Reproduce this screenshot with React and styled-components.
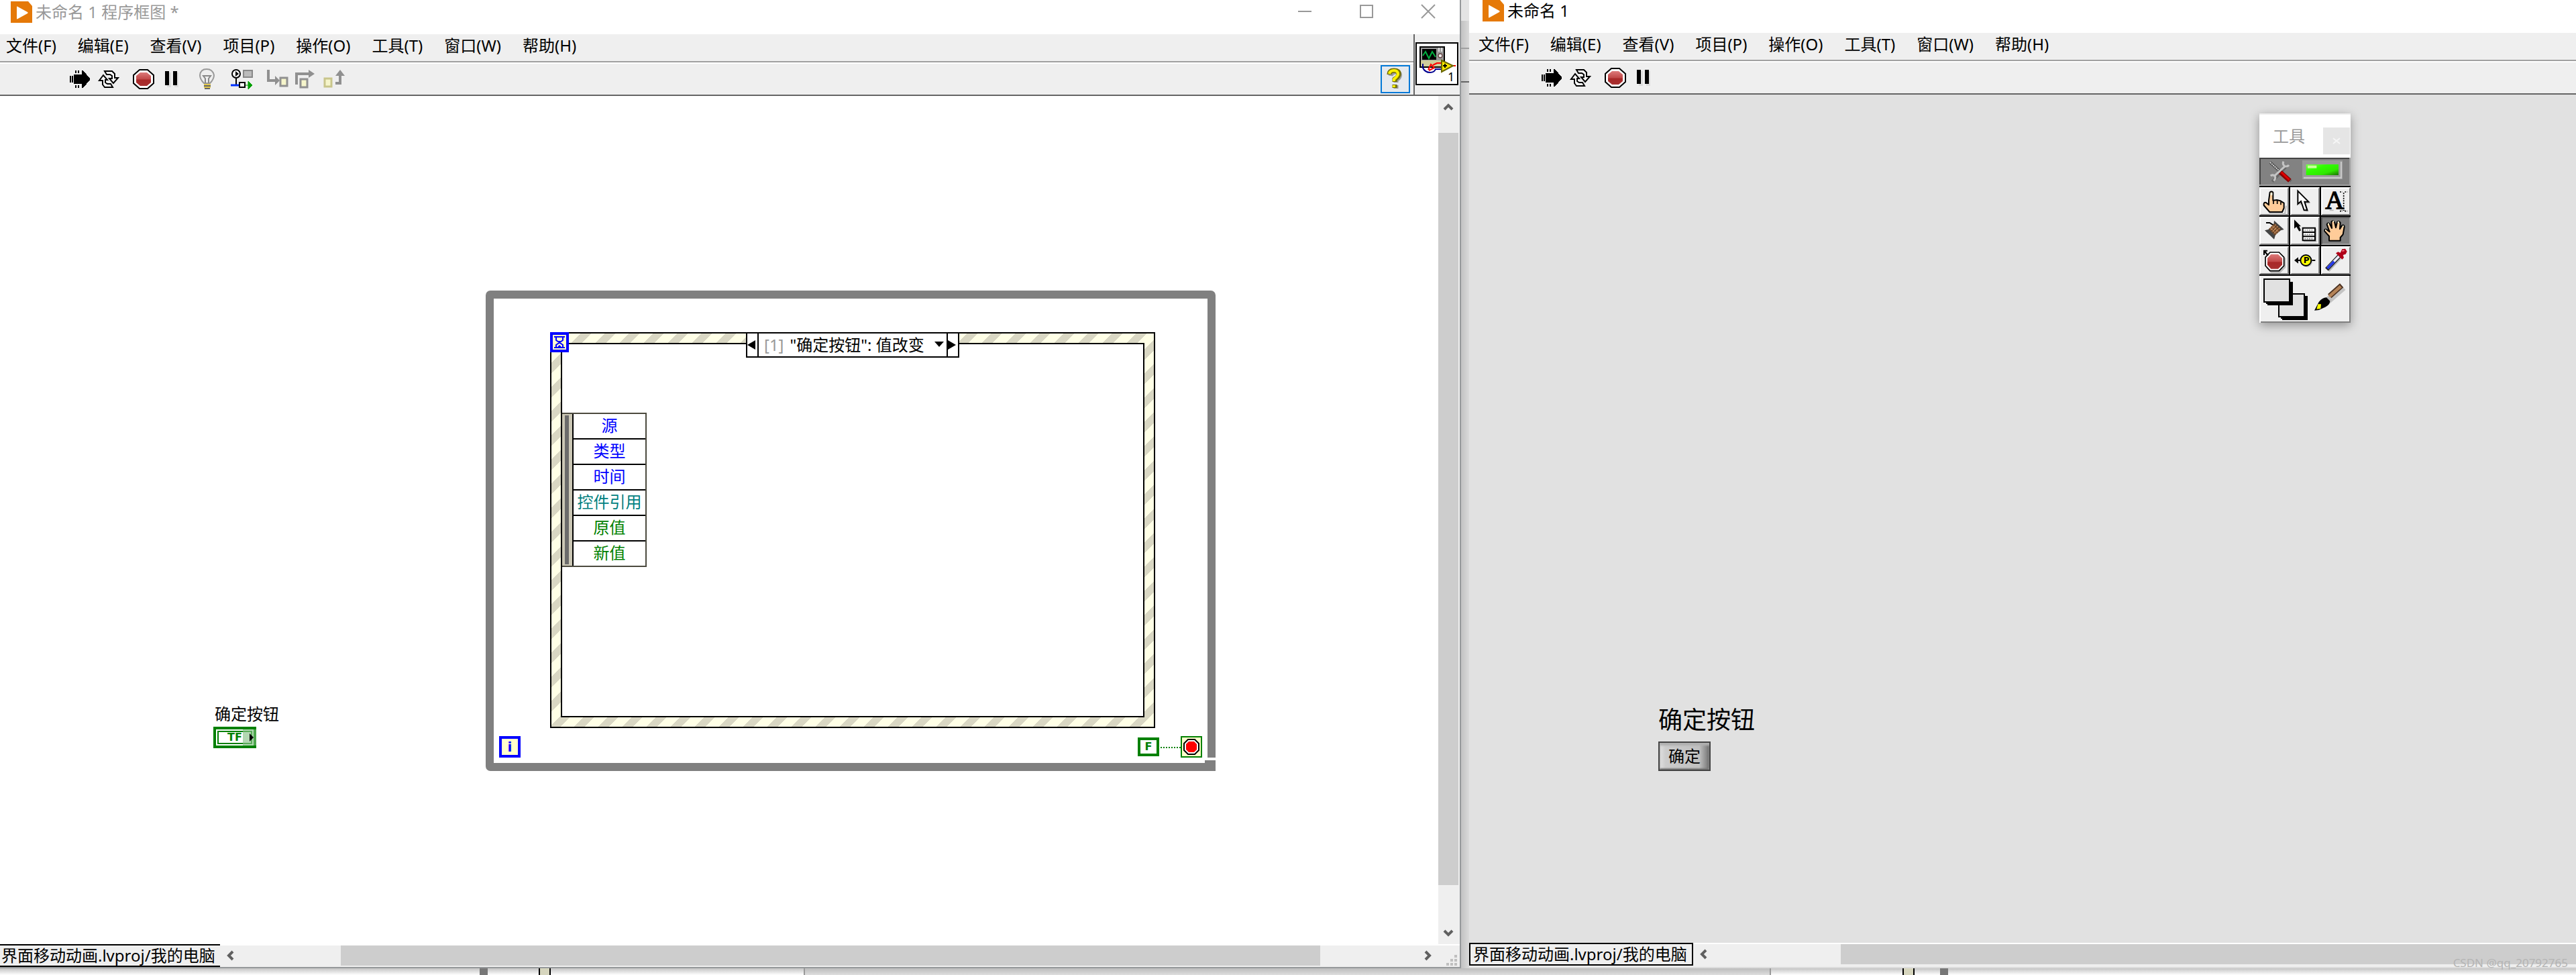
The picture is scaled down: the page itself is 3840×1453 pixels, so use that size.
import React from "react";
import styled, { createGlobalStyle, css } from "styled-components";

const Global = createGlobalStyle`
  *, *::before, *::after { box-sizing: border-box; }
  html, body, #root { height: 100%; }
  body {
    margin: 0;
    background: #dcdcdc;
    color: #000;
    font: 24px/32px "Noto Sans", "Noto Sans CJK SC", sans-serif;
    overflow: hidden;
  }
  button, select { font: inherit; color: inherit; margin: 0; padding: 0; border: 0; background: none; }
  svg { display: block; overflow: visible; }
`;

const line = "#646464";
const face = "#efefef";

/* ---------- page ---------- */

const Desktop = styled.div`
  min-height: 100%;
  display: flex;
  flex-direction: column;
`;

const Windows = styled.main`
  flex: 1;
  display: grid;
  grid-template-columns: minmax(0, 2178fr) 12px minmax(0, 1650fr);
`;

const Divider = styled.div`
  display: flex;
  flex-direction: column;
  gap: 48px;
  padding-top: 71px;
  background: linear-gradient(#e4e4e4 31px, transparent 31px), linear-gradient(90deg, #c2c2c2, #dadada);
`;

const DividerMark = styled.span`
  height: 2px;
  background: ${(p) => p.$color};
`;

const Window = styled.section`
  display: flex;
  flex-direction: column;
  min-width: 0;
  background: ${face};
  ${(p) =>
    p.$framed
      ? css`
          border-right: 2px solid #96999b;
          border-bottom: 2px solid #96999b;
        `
      : css`
          margin-bottom: 2px;
        `}
`;

/* ---------- title bar ---------- */

const TitleBar = styled.header`
  display: flex;
  align-items: flex-start;
  height: ${(p) => (p.$active ? 49 : 51)}px;
  padding: ${(p) => (p.$active ? "0 0 0 20px" : "2px 0 0 16px")};
  background: #fff;
  color: ${(p) => (p.$active ? "#000" : "#999")};
`;

const Title = styled.h1`
  flex: 1;
  margin: 0 0 0 5px;
  font-size: 24px;
  font-weight: 400;
  line-height: 32px;
`;

const Caption = styled.div`
  display: flex;
  gap: 72px;
  padding: 5px 37px 0 0;
`;

const CaptionButton = styled.button`
  width: 20px;
  height: 20px;
`;

/* ---------- menus and tool bars ---------- */

const Head = styled.div`
  display: flex;
`;

const HeadMain = styled.div`
  flex: 1;
  min-width: 0;
`;

const MenuBar = styled.nav`
  display: flex;
  gap: 32px;
  height: 44px;
  padding: 0 0 0 ${(p) => p.$indent}px;
  border-bottom: 2px solid #fff;
  box-shadow: inset 0 -2px #a0a0a0;
`;

const MenuItem = styled.button`
  height: 34px;
  line-height: 34px;
  white-space: nowrap;
`;

const ToolBar = styled.div`
  display: flex;
  align-items: center;
  height: 48px;
  padding: 0 5px 0 ${(p) => p.$indent}px;
  border-bottom: 2px solid ${line};
`;

const ToolGroup = styled.div`
  display: flex;
  align-items: center;
  gap: ${(p) => p.$gap}px;
  margin-right: ${(p) => p.$after || 0}px;
`;

const HelpButton = styled.button`
  display: grid;
  place-items: center;
  width: 44px;
  height: 42px;
  margin-left: auto;
  border: 2px solid #0078d7;
  background: #e5e9ee;
`;

const ConnectorPane = styled.div`
  width: 69px;
  padding: 12px 0 0 1px;
  border-left: 2px solid ${line};
  border-bottom: 2px solid ${line};
`;

const ViIcon = styled.button`
  display: block;
  width: 64px;
  height: 64px;
  border: 2px solid #000;
  background: #fff;
`;

/* ---------- work area ---------- */

const Body = styled.div`
  flex: 1;
  display: flex;
`;

const Canvas = styled.div`
  position: relative;
  flex: 1;
  min-width: 0;
  overflow: hidden;
  background: ${(p) => p.$color};
`;

const Placed = styled.div`
  position: absolute;
  left: ${(p) => p.$x}px;
  top: ${(p) => p.$y}px;
`;

const VScroll = styled.div`
  display: flex;
  flex-direction: column;
  width: 32px;
  padding-right: 2px;
`;

const VTrack = styled.div`
  flex: 1;
  display: grid;
  grid-template-rows: 21fr 1123fr 54fr;
`;

const VThumb = styled.div`
  grid-row: 2;
  background: #cdcdcd;
`;

const ScrollButton = styled.button`
  display: grid;
  place-items: center;
  width: ${(p) => (p.$vertical ? 30 : 32)}px;
  height: ${(p) => (p.$vertical ? 34 : 30)}px;
`;

const StatusBar = styled.footer`
  display: flex;
  align-items: flex-start;
  height: ${(p) => p.$height}px;
`;

const ProjectPath = styled.button`
  width: ${(p) => (p.$boxed ? 334 : 328)}px;
  height: 34px;
  padding-left: ${(p) => (p.$boxed ? 4 : 2)}px;
  border: solid #000;
  border-width: ${(p) => (p.$boxed ? "2px" : "2px 0")};
  line-height: 30px;
  text-align: left;
  white-space: nowrap;
`;

const HScroll = styled.div`
  flex: 1;
  display: flex;
  height: 34px;
  border-top: 2px solid #fff;
`;

const HTrack = styled.div`
  flex: 1;
  height: 30px;
  display: grid;
  grid-template-columns: ${(p) => p.$columns};
`;

const HThumb = styled.div`
  grid-column: 2;
  background: #cdcdcd;
`;

/* ---------- block diagram ---------- */

const WhileLoop = styled.div`
  width: 1088px;
  height: 716px;
  border: 12px solid #808080;
  border-radius: 7px 7px 0 7px;
`;

const EventCase = styled.div`
  width: 902px;
  height: 590px;
  padding: 14px;
  border: 2px solid #000;
  background: linear-gradient(
      135deg,
      #ffffe6 11.1%, #d9d7c3 11.1% 33.3%, #ffffe6 33.3% 61.1%, #d9d7c3 61.1% 83.3%, #ffffe6 83.3%
    )
    0 0 / 36px 36px;
`;

const EventBody = styled.div`
  height: 100%;
  border: 2px solid #000;
  background: #fff;
`;

const CaseSelector = styled.div`
  display: flex;
  align-items: stretch;
  width: 318px;
  height: 38px;
  border: 2px solid #000;
  background: #fff;
  line-height: 34px;
`;

const CaseStep = styled.button`
  display: grid;
  align-items: center;
  justify-items: start;
  width: 15px;
`;

const CaseField = styled.div`
  position: relative;
  flex: 1;
  display: flex;
  gap: 9px;
  padding-left: 8px;
  border: solid #000;
  border-width: 0 2px;
  white-space: nowrap;

  label { color: #999; }
  select { flex: 1; appearance: none; line-height: 32px; outline: 0; }
  svg { position: absolute; right: 4px; top: 12px; pointer-events: none; }
`;

const EventNode = styled.div`
  display: flex;
  width: 126px;
  border: 2px solid #4c4a3f;
  border-left: 0;
  background: #fff;
`;

const NodeGrip = styled.div`
  width: 15px;
  padding: 2px 5px 2px 4px;
  background: #cbc7b5;

  &::before { content: ""; display: block; height: 100%; background: #6b6b6b; }
`;

const NodeList = styled.ul`
  flex: 1;
  margin: 0;
  padding: 0;
  border-left: 2px solid #000;
  list-style: none;
`;

const NodeItem = styled.li`
  height: 38px;
  line-height: 34px;
  text-align: center;
  color: ${(p) => p.$color};
  border-bottom: 2px solid #000;

  &:last-child { height: 36px; border-bottom: 0; }
`;

const Terminal = styled.div`
  display: grid;
  place-items: center;
  width: 32px;
  height: ${(p) => p.$height || 32}px;
  border: ${(p) => p.$border || 4}px solid ${(p) => p.$color};
  background: ${(p) => p.$fill || "#ffffcc"};
  color: ${(p) => p.$color};
  font: bold ${(p) => p.$size || 20}px/20px "DejaVu Sans", sans-serif;
`;

const Wire = styled.div`
  width: 30px;
  height: 2px;
  background: repeating-linear-gradient(90deg, #008000 0 2px, #fff 2px 4px);
`;

const ResizeGap = styled.div`
  width: 12px;
  height: 4px;
  background: #fff;
`;

const ResizeCorner = styled.div`
  width: 16px;
  height: 6px;
  background: #808080;
`;

const BoolTerminal = styled.div`
  width: 64px;
  height: 32px;
  padding: 2px;
  border: 4px solid #008000;
  background: #fff;
  position: relative;

  span {
    display: block;
    height: 20px;
    padding-left: 13px;
    border: 2px solid #008000;
    color: #008000;
    font: bold 16px/16px "DejaVu Sans", sans-serif;
  }
  svg { position: absolute; right: -4px; top: 0; }
`;

const Label = styled.div`
  font-size: ${(p) => p.$size}px;
  line-height: ${(p) => p.$size + 8}px;
  white-space: nowrap;
`;

/* ---------- front panel ---------- */

const OkButton = styled.button`
  width: 78px;
  height: 44px;
  border: 2px solid #444;
  background: linear-gradient(90deg, #e0e0e0, #cccccc 12%, #c0c0c0 80%, #8a8a8a 94%, #666);
  box-shadow: inset 0 4px 3px #b0b0b0, inset 0 -2px 2px #777;
  line-height: 36px;
`;

const Palette = styled.aside`
  width: 136px;
  border-top: 2px solid #eee;
  background: #000;
  box-shadow: 0 4px 14px rgba(0, 0, 0, 0.35);
`;

const PaletteTitle = styled.div`
  display: flex;
  justify-content: space-between;
  align-items: flex-start;
  height: 64px;
  padding: 0 1px 0 20px;
  background: #fff;
  color: #999;

  h2 { margin: 0; font-size: 24px; font-weight: 400; line-height: 64px; }
`;

const PaletteClose = styled.button`
  display: grid;
  place-items: center;
  width: 40px;
  height: 40px;
  margin-top: 19px;
  background: #e5e5e5;
`;

const AutoTool = styled.button`
  display: block;
  width: 136px;
  height: 42px;
  background: #828282;
`;

const ToolGrid = styled.div`
  display: grid;
  grid-template-columns: repeat(3, 44px);
  gap: 2px;
  padding: 2px 0;
`;

const Tool = styled.button`
  height: 42px;
  border: 2px solid;
  border-color: ${(p) => (p.$on ? "#5a5a5a #a0a0a0 #a0a0a0 #5a5a5a" : "#fff #7f7f7f #7f7f7f #fff")};
  background: ${(p) => (p.$on ? "#7f7f7f" : face)};
`;

const ColorTool = styled.button`
  display: block;
  width: 136px;
  height: 70px;
  background: ${face};
  box-shadow: inset 2px 0 #fff, inset -2px -2px #7f7f7f;
`;

/* ---------- what shows below the windows ---------- */

const Behind = styled.div`
  display: grid;
  grid-template-columns: 1200fr 1440fr 1200fr;
  height: 10px;
`;

const BehindPane = styled.div`
  display: grid;
  grid-template-columns: ${(p) => p.$columns || "1fr"};
  background: ${(p) => (p.$dark ? "linear-gradient(#bcbcbc, #dedede)" : "linear-gradient(#c4c4c4, #fff)")};
  border-right: ${(p) => (p.$edge ? "2px solid #999" : "0")};
`;

const BehindBar = styled.span`
  background: #777;
`;

const BehindStripe = styled.span`
  border: solid #000;
  border-width: 0 2px;
  background: #d6d5bd;
`;

const Watermark = styled.div`
  position: absolute;
  right: 12px;
  bottom: 6px;
  color: #b4b4b4;
  font: 17px/24px "Noto Sans", sans-serif;
`;

/* ---------- drawings ---------- */

const Logo = () => (
  <svg width="32" height="32" viewBox="0 0 32 32" aria-hidden="true">
    <path d="M0 0H26L32 7V32H0Z" fill="#e57908" />
    <path d="M9 8.500Q9 7 10.500 8L25 16Q26.500 17 25 18L10.500 26Q9 27 9 25.500Z" fill="#fff" />
  </svg>
);

const RunIcon = () => (
  <svg width="30" height="26" viewBox="0 0 15 13" shapeRendering="crispEdges">
    <path d="M3 3H9V0H10L15 6V7L10 13H9V10H3Z" />
    <path d="M0 4h1v5h-1zM1.500 4h1v5h-1zM4 0h1v2h-1zM6 0h1v2h-1zM4 11h1v2h-1zM6 11h1v2h-1z" />
  </svg>
);

const LoopIcon = () => (
  <svg width="32" height="28" viewBox="0 0 16 14">
    <path d="M5 1H10.500L12.500 3V6H15L11.500 10L8.500 6.500H10.500V4.500L9 3.500H6.500Z" fill="#fff" stroke="#000" />
    <path d="M11 13H5L3.500 11V8H1L4 4L7 7.500H5.500V9.500L7 10.500H9.500Z" fill="#fff" stroke="#000" />
  </svg>
);

const StopIcon = () => (
  <svg width="32" height="30" viewBox="0 0 32 30">
    <defs>
      <linearGradient id="stop" x2="0" y2="1">
        <stop offset="0" stopColor="#dd7a7a" />
        <stop offset=".5" stopColor="#c04848" />
        <stop offset=".55" stopColor="#a82828" />
        <stop offset="1" stopColor="#a83030" />
      </linearGradient>
    </defs>
    <path d="M10 1H22L31 9V21L22 29H10L1 21V9Z" fill="#fff" stroke="#000" strokeWidth="2" />
    <path d="M11 5H21L27 10V20L21 25H11L5 20V10Z" fill="url(#stop)" />
  </svg>
);

const PauseIcon = () => (
  <svg width="20" height="24" viewBox="0 0 20 24">
    <path d="M3 2h6v22h-6zM14 2h6v22h-6z" fill="#ddd" />
    <path d="M0 0h6v21h-6zM12 0h6v21h-6z" />
  </svg>
);

const BulbIcon = () => (
  <svg width="26" height="32" viewBox="0 0 26 32">
    <path d="M8 22Q2 16 2 10Q3 1 12 1T23 10Q23 16 17 22Z" fill="#eee" stroke="#999" strokeWidth="2" />
    <path d="M10 22V15L7 11H18L15 15V22" fill="none" stroke="#888" strokeWidth="2" />
    <path d="M8 23h10v2H8zM8 27h10v2H8z" fill="#e3c94c" />
    <path d="M8 25h10v2H8zM9 29h8v2H9z" fill="#666" />
  </svg>
);

const RetainIcon = () => (
  <svg width="34" height="30" viewBox="0 0 34 30">
    <circle cx="8" cy="7" r="6" fill="#fff" stroke="#000" strokeWidth="2" />
    <path d="M7 3v8l5-4z" />
    <path d="M19 2h13v10H19z" fill="#bbb" stroke="#888" strokeWidth="2" />
    <path d="M8 13V23" stroke="#000" strokeWidth="2" />
    <path d="M0 24H13" stroke="#0030ff" strokeWidth="3" />
    <path d="M13 20h8v7h-8z" fill="#fff" stroke="#000" strokeWidth="2" />
    <path d="M22 24h4M26 18l6 6-6 6z" fill="#00a000" stroke="#00a000" />
  </svg>
);

const stepPaths = {
  into: ["M2 0V16H14", "M12 9l7 7-7 7z", [20, 12]],
  over: ["M2 22V6H20", "M20 0l9 6-9 6z", [8, 14]],
  out: ["M18 20H25V8", "M18 9l7-9 7 9z", [2, 13]],
};

const StepIcon = ({ kind }) => {
  const [tail, head, [x, y]] = stepPaths[kind];
  return (
    <svg width="34" height="28" viewBox="0 0 34 28">
      <path d={tail} fill="none" stroke="#909090" strokeWidth="4" />
      <path d={head} fill="#909090" />
      <rect x={x} y={y} width="10" height="12" fill="#f6f5cb" stroke={kind === "out" ? "#c9c68c" : "#909090"} strokeWidth="3" />
    </svg>
  );
};

const HelpIcon = () => (
  <svg width="28" height="32" viewBox="0 0 28 32">
    <path d="M7 11Q8 5 15 5Q22 6 20 12Q19 15 15 17V21M15 25V30" fill="none" stroke="#999" strokeWidth="7" />
    <path d="M5 9Q5 3 12 3Q20 3 19 9Q19 12 13 16V20M13 24V29" fill="none" stroke="#716d00" strokeWidth="7" />
    <path d="M5 8Q6 3 12 3Q18 3 18 9Q17 12 12 16V19M12 25V28" fill="none" stroke="#fff200" strokeWidth="4" />
  </svg>
);

const ScopeIcon = () => (
  <svg width="60" height="60" viewBox="1 1 30 30">
    <path d="M3.500 3.500H21.500V18.500H3.500Z" fill="#cfcc9c" stroke="#000" />
    <path d="M4 4H21V13.500H4Z" fill="#999" />
    <path d="M5 5H15.500V13H5Z" />
    <path d="M5.500 10L7.500 7L10 12L12.500 7L15 11" fill="none" stroke="#00b040" />
    <path d="M17.500 4v3M19.500 4v3" stroke="#ddd" />
    <circle cx="18.500" cy="10" r="1.500" fill="#eee" stroke="#644" strokeWidth=".7" />
    <path d="M5.500 16V19Q7 22.500 11 22.500Q14 22.500 15 20H19" fill="none" stroke="#000090" />
    <path d="M9.500 20.500L11.500 16.500L14 19L10 21M13 17L16 15.500H19M26 17.500H30" fill="none" stroke="#f00" />
    <path d="M19.500 13.500L28 17.500L19.500 22Z" fill="#ffe800" stroke="#6b6800" />
    <path d="M20.500 17.500h3M22 16v3" stroke="#000" />
    <text x="24" y="29" fontSize="9" fontFamily="Noto Sans, sans-serif">1</text>
  </svg>
);

const turns = { up: 0, right: 90, down: 180, left: 270 };

const Chevron = ({ to }) => (
  <svg width="16" height="16" viewBox="0 0 16 16" aria-hidden="true">
    <path d="M2 11L8 5L14 11" fill="none" stroke="#606060" strokeWidth="4" transform={`rotate(${turns[to]} 8 8)`} />
  </svg>
);

const SizeGrip = () => (
  <svg width="32" height="32" viewBox="0 0 32 32" aria-hidden="true">
    <path d="M24 14h4v4h-4zM18 20h4v4h-4zM24 20h4v4h-4zM12 26h4v4h-4zM18 26h4v4h-4zM24 26h4v4h-4z" fill="#bfbfbf" />
  </svg>
);

const Triangle = ({ d, w, h }) => (
  <svg width={w} height={h} viewBox={`0 0 ${w} ${h}`} aria-hidden="true"><path d={d} /></svg>
);

const Hourglass = () => (
  <svg width="28" height="30" viewBox="0 0 14 15">
    <path d="M0 0H14V15H0Z" fill="#00f" />
    <path d="M2 2H12V13H2Z" fill="#ffffcc" />
    <path d="M3 3.500H11M3 11.500H11M4.500 4V6L9.500 9.500V11M9.500 4V6L4.500 9.500V11" fill="none" stroke="#00f" />
    <path d="M5.500 11L7 9.500L8.500 11ZM6 6.500h2L7 7.500z" fill="#00f" />
  </svg>
);

const hand = { fill: "#ffcc99", stroke: "#000", strokeWidth: 6, strokeLinejoin: "round" };

const tools = [
  {
    name: "操作值",
    box: "90 393 120 114",
    art: (
      <>
        <path d="M128 506L198 506L204 470" fill="none" stroke="#bbb" strokeWidth="6" />
        <path d="M131 410Q138 403 145 410V446L162 444L178 448L194 458V480L186 498H130L104 468Q102 452 114 456L126 466V446Z" {...hand} />
        <path d="M147 446V462M164 446V462M180 452V466" stroke="#000" strokeWidth="5" />
        <path d="M134 411h8v12h-8z" fill="#ffffe0" />
      </>
    ),
  },
  {
    name: "定位",
    box: "228 393 120 114",
    art: (
      <>
        <path d="M264 412V468L276 458L292 496H304L292 460H312Z" fill="#bbb" />
        <path d="M256 404V462L270 450L284 490H298L286 452H304Z" fill="#fff" stroke="#000" strokeWidth="6" />
      </>
    ),
  },
  {
    name: "编辑文本",
    box: "366 393 120 114",
    art: (
      <>
        <path d="M398 490H416M448 490H468" stroke="#bbb" strokeWidth="5" />
        <text x="379" y="484" fontSize="116" stroke="#000" strokeWidth="4" fontFamily="Liberation Serif, serif">A</text>
        <path d="M461 412V492M444 408H456M466 408H478M444 494H456M466 494H478" stroke="#000" strokeWidth="5" strokeDasharray="6 5" />
      </>
    ),
  },
  {
    name: "连线",
    box: "90 525 120 114",
    art: (
      <>
        <path d="M114 546H130L146 556" fill="none" stroke="#000" strokeWidth="6" />
        <path d="M150 536L194 576L180 580L156 600L150 620L108 580L124 576L148 556Z" fill="#444" />
        <path d="M126 574L152 548L180 576L154 602Z" fill="#6b4426" />
        <path d="M133 567L161 595M141 559L169 587M166 562L140 588M174 570L148 596M158 554L132 580" stroke="#d89c68" strokeWidth="4" strokeDasharray="5 4" />
      </>
    ),
  },
  {
    name: "对象快捷菜单",
    box: "228 525 120 114",
    art: (
      <>
        <path d="M240 532V572L250 564L262 584L270 580L262 562H270Z" />
        <path d="M282 572H340V632H282Z" fill="#bbb" />
        <path d="M278 569H333V625H278ZM278 588H333M278 607H333" fill="#fff" stroke="#000" strokeWidth="6" />
        <path d="M286 579H328M286 598H328M286 617H328" stroke="#888" strokeWidth="5" strokeDasharray="6 4" />
      </>
    ),
  },
  {
    name: "滚动窗口",
    box: "366 525 120 114",
    on: true,
    art: (
      <>
        <path d="M396 626V606L376 584Q374 572 384 576L398 586L386 554Q388 544 398 550L408 570L406 542Q412 534 420 542L426 568L432 542Q440 536 446 546L444 574L454 558Q464 554 464 564L458 598L446 612V626Z" {...hand} />
        <path d="M412 540h6M434 543h7M390 551h6M456 561h5M378 579h5" stroke="#fffbd8" strokeWidth="6" />
      </>
    ),
  },
  {
    name: "断点",
    box: "90 657 120 114",
    art: (
      <>
        <path d="M136 682H178L202 706V746L178 770H136L114 746Z" fill="#bbb" />
        <path d="M132 678H172L194 700V738L172 761H132L111 738V700Z" fill="#fff" stroke="#000" strokeWidth="5" />
        <path d="M136 687H168L186 704V734L168 752H136L120 734V704Z" fill="url(#stop)" />
        <path d="M102 668h18v6h-8l14 16-6 4-12-14v10h-6z" />
      </>
    ),
  },
  {
    name: "探针",
    box: "228 657 120 114",
    art: (
      <>
        <path d="M254 714H334" stroke="#000" strokeWidth="6" />
        <path d="M240 714L258 700V728Z" />
        <circle cx="296" cy="719" r="25" fill="#bbb" />
        <circle cx="292" cy="714" r="24" fill="#ff0" stroke="#000" strokeWidth="6" />
        <text x="281" y="727" fontSize="36" fontWeight="bold" fontFamily="DejaVu Sans, sans-serif">P</text>
      </>
    ),
  },
  {
    name: "获取颜色",
    box: "366 657 120 114",
    art: (
      <>
        <path d="M392 760L444 704" stroke="#bbb" strokeWidth="14" />
        <path d="M385 754L444 692" stroke="#222" strokeWidth="19" />
        <path d="M390 748L442 694" stroke="#eef" strokeWidth="11" />
        <path d="M388 750L418 719" stroke="#2438e8" strokeWidth="11" />
        <path d="M426 682L436 676L446 680L454 664L468 662L476 674L470 686L458 690L462 702L454 710Z" fill="#b00018" />
        <path d="M454 672L464 670" stroke="#ff8090" strokeWidth="5" />
      </>
    ),
  },
];

const AutoArt = () => (
  <svg width="136" height="42" viewBox="84 255 408 126">
    <defs>
      <linearGradient id="led" x2="1" y2="1">
        <stop offset="0" stopColor="#7dff50" />
        <stop offset=".35" stopColor="#30ff00" />
        <stop offset=".7" stopColor="#30e800" />
        <stop offset="1" stopColor="#1c7000" />
      </linearGradient>
    </defs>
    <path d="M84 258H492M87 255V381" stroke="#444" strokeWidth="6" />
    <path d="M84 378H492M489 255V381" stroke="#a2a2a2" strokeWidth="6" />
    <path d="M142 362L206 292M184 322L226 360" stroke="#666" strokeWidth="12" />
    <path d="M132 276L178 318" stroke="#444" strokeWidth="12" />
    <path d="M132 276L178 318" stroke="#d8d8d8" strokeWidth="6" strokeDasharray="6 3" />
    <path d="M150 338L200 292M192 272Q186 284 196 292Q208 298 216 288M134 336Q144 328 154 338Q158 350 148 358" fill="none" stroke="#c4c4c4" strokeWidth="9" />
    <path d="M178 320L220 358" stroke="#800" strokeWidth="20" />
    <path d="M182 320L218 354" stroke="#e00000" strokeWidth="9" />
    <path d="M276 267H456V351H276Z" fill="#999" />
    <path d="M282 345H450V273" fill="none" stroke="#c8c8c8" strokeWidth="7" />
    <path d="M293 285H438V333H293Z" fill="url(#led)" />
    <path d="M300 290h40v12h-40z" fill="#c8ff9c" />
  </svg>
);

const ColorArt = () => (
  <svg width="136" height="70" viewBox="84 783 408 210">
    <path d="M180 873H300V981H186V975H180Z" />
    <path d="M171 864H285V966H171Z" fill="#e1e1e1" stroke="#000" strokeWidth="6" />
    <path d="M120 810H234V915H120V909H114V804Z" />
    <path d="M105 798H219V900H105Z" fill="#e1e1e1" stroke="#000" strokeWidth="6" />
    <path d="M372 920L464 840" stroke="#c4c4c4" strokeWidth="16" />
    <path d="M398 874L452 826" stroke="#4a3020" strokeWidth="24" />
    <path d="M396 876L448 830" stroke="#b48358" strokeWidth="14" />
    <path d="M380 882L392 872L408 890L396 900Z" fill="#bbb" />
    <path d="M330 938L350 900Q366 880 384 880L400 896Q400 912 376 924L350 936Z" />
    <path d="M340 932L346 910H360L358 930Z" fill="#ff0" />
  </svg>
);

/* ---------- assembled parts ---------- */

const menus = ["文件(F)", "编辑(E)", "查看(V)", "项目(P)", "操作(O)", "工具(T)", "窗口(W)", "帮助(H)"];

const Menu = ({ indent }) => (
  <MenuBar $indent={indent}>
    {menus.map((m) => <MenuItem key={m}>{m}</MenuItem>)}
  </MenuBar>
);

const RunTools = ({ after }) => (
  <>
    <ToolGroup $gap={12} $after={20}>
      <button aria-label="运行"><RunIcon /></button>
      <button aria-label="连续运行"><LoopIcon /></button>
    </ToolGroup>
    <ToolGroup $gap={16} $after={after}>
      <button aria-label="中止执行"><StopIcon /></button>
      <button aria-label="暂停"><PauseIcon /></button>
    </ToolGroup>
  </>
);

const nodeItems = [
  ["源", "#0000ff"],
  ["类型", "#0000ff"],
  ["时间", "#0000ff"],
  ["控件引用", "#008080"],
  ["原值", "#008000"],
  ["新值", "#008000"],
];

const Diagram = () => (
  <Canvas $color="#fff">
    <Placed $x={724} $y={290}><WhileLoop /></Placed>
    <Placed $x={1796} $y={990}><ResizeCorner /></Placed>
    <Placed $x={1800} $y={986}><ResizeGap /></Placed>
    <Placed $x={820} $y={352}>
      <EventCase><EventBody /></EventCase>
    </Placed>
    <Placed $x={820} $y={352}><Hourglass /></Placed>
    <Placed $x={1112} $y={352}>
      <CaseSelector>
        <CaseStep aria-label="上一分支"><Triangle w={12} h={14} d="M12 0V14L0 7Z" /></CaseStep>
        <CaseField>
          <label htmlFor="case">[1]</label>
          <select id="case"><option>"确定按钮": 值改变</option></select>
          <Triangle w={14} h={8} d="M0 0H14L7 8Z" />
        </CaseField>
        <CaseStep aria-label="下一分支"><Triangle w={12} h={14} d="M0 0V14L12 7Z" /></CaseStep>
      </CaseSelector>
    </Placed>
    <Placed $x={838} $y={472}>
      <EventNode>
        <NodeGrip />
        <NodeList>
          {nodeItems.map(([text, color]) => <NodeItem key={text} $color={color}>{text}</NodeItem>)}
        </NodeList>
      </EventNode>
    </Placed>
    <Placed $x={744} $y={954}><Terminal $color="#0000ff">i</Terminal></Placed>
    <Placed $x={1696} $y={956}><Terminal $color="#008000" $height={28} $fill="#fff" $size={16}>F</Terminal></Placed>
    <Placed $x={1730} $y={970}><Wire /></Placed>
    <Placed $x={1760} $y={954}>
      <Terminal $color="#008000" $border={2}>
        <svg width="24" height="24" viewBox="0 0 24 24">
          <path d="M7 1H17L23 7V17L17 23H7L1 17V7Z" fill="#fff" stroke="#000" strokeWidth="2" />
          <path d="M8 4H16L20 8V16L16 20H8L4 16V8Z" fill="#f00" />
        </svg>
      </Terminal>
    </Placed>
    <Placed $x={320} $y={905}><Label $size={24}>确定按钮</Label></Placed>
    <Placed $x={318} $y={940}>
      <BoolTerminal>
        <span>TF</span>
        <svg width="20" height="24" viewBox="0 0 20 24">
          <path d="M0 0H20V24H0Z" fill="#fff" opacity=".3" />
          <path d="M0 0H16V24H0Z" fill="#66b066" opacity=".5" />
          <path d="M10 6L16 12L10 18Z" />
        </svg>
      </BoolTerminal>
    </Placed>
  </Canvas>
);

const ToolsPalette = () => (
  <Palette>
    <PaletteTitle>
      <h2>工具</h2>
      <PaletteClose aria-label="关闭">
        <svg width="12" height="12" viewBox="0 0 12 12"><path d="M1 2L11 10M11 2L1 10" stroke="#f6f6f6" strokeWidth="2" /></svg>
      </PaletteClose>
    </PaletteTitle>
    <AutoTool aria-label="自动选择工具"><AutoArt /></AutoTool>
    <ToolGrid>
      {tools.map((t) => (
        <Tool key={t.name} $on={t.on} aria-label={t.name} aria-pressed={!!t.on}>
          <svg width="40" height="38" viewBox={t.box}>{t.art}</svg>
        </Tool>
      ))}
    </ToolGrid>
    <ColorTool aria-label="设置颜色"><ColorArt /></ColorTool>
  </Palette>
);

export default function App() {
  return (
    <Desktop>
      <Global />
      <Windows>
        <Window $framed>
          <TitleBar>
            <Logo />
            <Title>未命名 1 程序框图 *</Title>
            <Caption>
              <CaptionButton aria-label="最小化">
                <svg width="20" height="20"><path d="M0 10H20" stroke="#999" strokeWidth="2" /></svg>
              </CaptionButton>
              <CaptionButton aria-label="最大化">
                <svg width="20" height="20"><path d="M1 1H19V19H1Z" fill="none" stroke="#999" strokeWidth="2" /></svg>
              </CaptionButton>
              <CaptionButton aria-label="关闭">
                <svg width="20" height="20"><path d="M0 0L20 20M20 0L0 20" stroke="#999" strokeWidth="2" /></svg>
              </CaptionButton>
            </Caption>
          </TitleBar>
          <Head>
            <HeadMain>
              <Menu indent={9} />
              <ToolBar $indent={104}>
                <RunTools after={30} />
                <ToolGroup $gap={22} $after={20}>
                  <button aria-label="高亮显示执行过程"><BulbIcon /></button>
                  <button aria-label="保存连线值"><RetainIcon /></button>
                </ToolGroup>
                <ToolGroup $gap={8}>
                  <button aria-label="单步步入"><StepIcon kind="into" /></button>
                  <button aria-label="单步步过"><StepIcon kind="over" /></button>
                  <button aria-label="单步步出"><StepIcon kind="out" /></button>
                </ToolGroup>
                <HelpButton aria-label="即时帮助"><HelpIcon /></HelpButton>
              </ToolBar>
            </HeadMain>
            <ConnectorPane>
              <ViIcon aria-label="VI 图标"><ScopeIcon /></ViIcon>
            </ConnectorPane>
          </Head>
          <Body>
            <Diagram />
            <VScroll>
              <ScrollButton $vertical aria-label="向上"><Chevron to="up" /></ScrollButton>
              <VTrack><VThumb /></VTrack>
              <ScrollButton $vertical aria-label="向下"><Chevron to="down" /></ScrollButton>
            </VScroll>
          </Body>
          <StatusBar $height={34}>
            <ProjectPath>界面移动动画.lvproj/我的电脑</ProjectPath>
            <HScroll>
              <ScrollButton aria-label="向左"><Chevron to="left" /></ScrollButton>
              <HTrack $columns="148fr 1460fr 144fr"><HThumb /></HTrack>
              <ScrollButton aria-label="向右"><Chevron to="right" /></ScrollButton>
              <SizeGrip />
            </HScroll>
          </StatusBar>
        </Window>

        <Divider>
          <DividerMark $color="#a0a0a0" />
          <DividerMark $color="#646464" />
        </Divider>

        <Window>
          <TitleBar $active>
            <Logo />
            <Title>未命名 1</Title>
          </TitleBar>
          <Menu indent={14} />
          <ToolBar $indent={108}><RunTools /></ToolBar>
          <Body>
            <Canvas $color="#e1e1e1">
              <Placed $x={282} $y={910}><Label $size={36}>确定按钮</Label></Placed>
              <Placed $x={282} $y={964}><OkButton>确定</OkButton></Placed>
              <Placed $x={1178} $y={28}><ToolsPalette /></Placed>
            </Canvas>
          </Body>
          <StatusBar $height={36}>
            <ProjectPath $boxed>界面移动动画.lvproj/我的电脑</ProjectPath>
            <HScroll>
              <ScrollButton aria-label="向左"><Chevron to="left" /></ScrollButton>
              <HTrack $columns="188fr 1096fr"><HThumb /></HTrack>
            </HScroll>
          </StatusBar>
        </Window>
      </Windows>
      <Behind>
        <BehindPane $edge $columns="716fr 12px 76fr 18px 378fr">
          <span /><BehindBar /><span /><BehindStripe />
        </BehindPane>
        <BehindPane $dark $edge />
        <BehindPane $columns="196fr 18px 38fr 12px 936fr">
          <span /><BehindStripe /><span /><BehindBar />
        </BehindPane>
      </Behind>
      <Watermark>CSDN @qq_20792765</Watermark>
    </Desktop>
  );
}
